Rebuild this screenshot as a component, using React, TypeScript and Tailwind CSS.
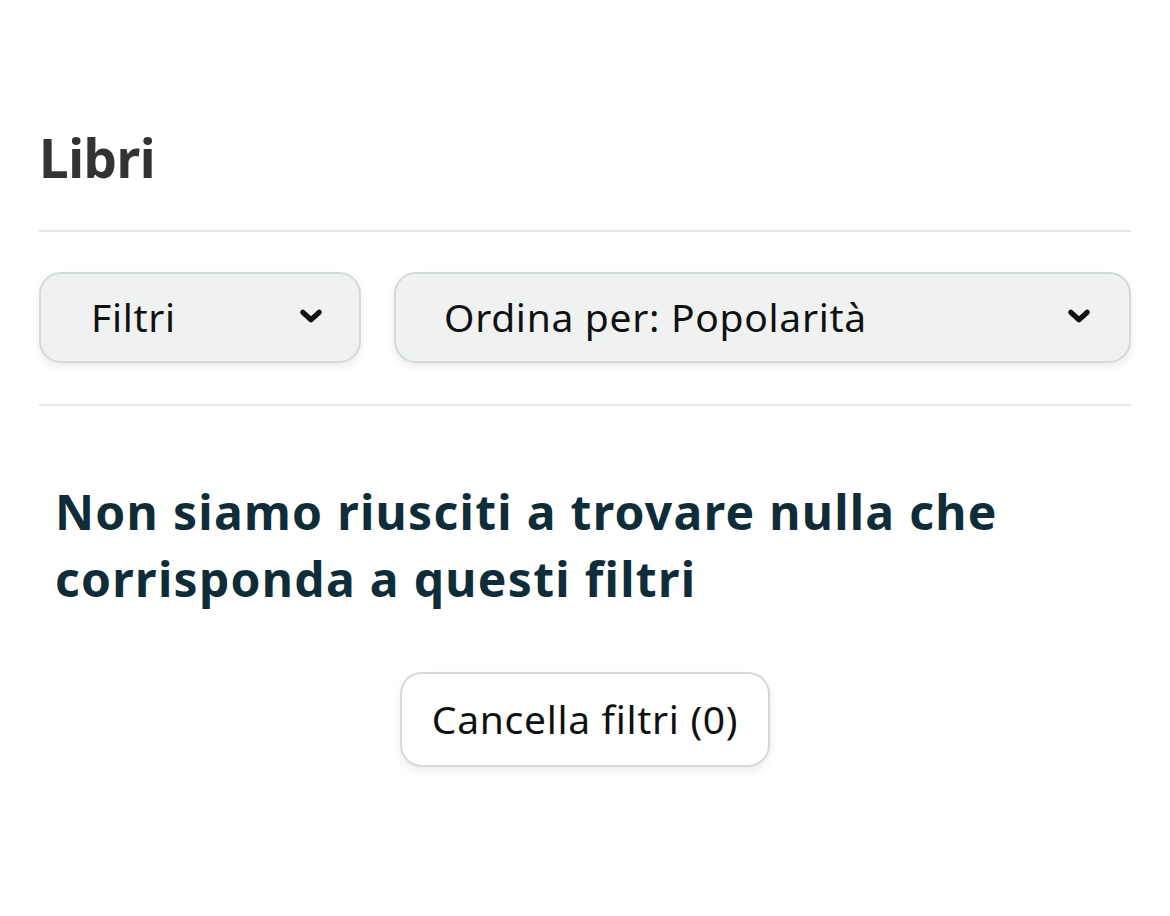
import React from 'react';

const Chevron: React.FC = () => (
  <svg className="w-[36px] h-[36px] -mt-[4px]" viewBox="0 0 24 24" fill="none" stroke="#0f1111" strokeWidth={3.4} strokeLinecap="round" strokeLinejoin="round">
    <path d="M6.5 9.5l5.5 5 5.5-5" />
  </svg>
);

const App: React.FC = () => {
  return (
    <div className="min-h-[916px] w-[1170px] bg-white px-[39px] pt-[126px]" style={{ fontFamily: '"Noto Sans", Roboto, sans-serif' }}>
      <h1 className="text-[53px] leading-[64px] font-bold text-[#333333] tracking-[-0.5px]">Libri</h1>

      <div className="mt-[40px] h-[2px] bg-[#e7e7e7]" />

      <div className="mt-[40px] flex gap-[33px]">
        <button className="w-[322px] h-[91px] flex items-center justify-between pl-[50px] pr-[30px] rounded-[22px] bg-[#f0f2f2] border-2 border-[#d5d9d9] shadow-[0_4px_8px_rgba(15,17,17,0.08)] text-[39px] tracking-[0.7px] text-[#0f1111]">
          <span>Filtri</span>
          <Chevron />
        </button>
        <button className="flex-1 h-[91px] flex items-center justify-between pl-[48px] pr-[32px] rounded-[22px] bg-[#f0f2f2] border-2 border-[#d5d9d9] shadow-[0_4px_8px_rgba(15,17,17,0.08)] text-[39px] tracking-[0.7px] text-[#0f1111]">
          <span>Ordina per: Popolarità</span>
          <Chevron />
        </button>
      </div>

      <div className="mt-[41px] h-[2px] bg-[#e7e7e7]" />

      <h2 className="mt-[72px] px-[16px] text-[48px] leading-[67px] font-bold tracking-[1.3px] text-[#0f2d38]">
        Non siamo riusciti a trovare nulla che corrisponda a questi filtri
      </h2>

      <div className="mt-[60px] flex justify-center">
        <button className="h-[95px] px-[30px] rounded-[22px] bg-white border-2 border-[#d5d9d9] shadow-[0_4px_8px_rgba(15,17,17,0.08)] text-[39px] tracking-[0.7px] text-[#0f1111]">
          Cancella filtri (0)
        </button>
      </div>
    </div>
  );
};

export default App;
